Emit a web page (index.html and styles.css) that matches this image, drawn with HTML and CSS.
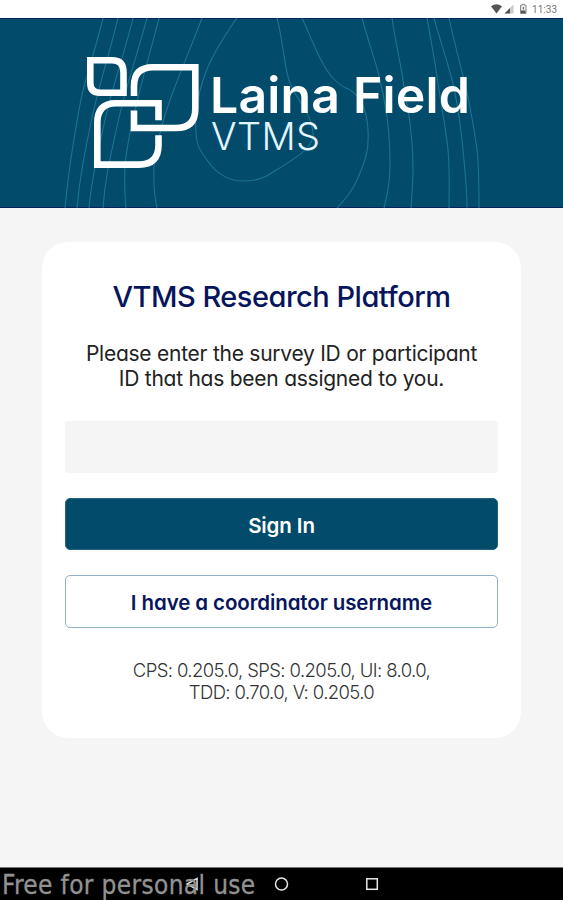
FILE: index.html
```
<!DOCTYPE html>
<html lang="en">
<head>
  <meta charset="UTF-8" />
  <meta name="viewport" content="width=device-width, initial-scale=1.0"/>
  <title>Laina Field VTMS</title>
  <link rel="stylesheet" href="styles.css">
</head>
<body>

  <div class="status-bar">
    <svg class="status-icons" width="38" height="12" viewBox="0 0 38 12">
      <path d="M0 3.3Q5.500 -.8 11 3.300L5.500 10.500Z" fill="#555"/>
      <path d="M22.500 1.500V10.500H13.500Z" fill="#ccc"/>
      <path d="M19 5V10.500H13.500Z" fill="#555"/>
      <path d="M29.500 2.300H31V1.300H33.500V2.300H35V10.500H29.500Z" fill="#eee" stroke="#888"/>
      <path d="M30 7.500H34.500V10H30Z M31.800 4H32.800V6.500H31.800Z" fill="#555"/>
    </svg>
    <span class="clock">11:33</span>
  </div>

  <header class="banner">
    <svg class="banner-art" viewBox="0 18 563 190" role="img" aria-label="Laina Field VTMS">
      <!-- contour lines -->
      <g class="contours">
        <path d="M103 18C97 42 91 62 85 83S69 165 65 208"/>
        <path d="M118 18C111 48 99 85 92 118S80 175 77 208"/>
        <path d="M133 18C126 48 112 88 105 120S92 175 89 208"/>
        <path d="M147 18C139 48 125 90 118 122S105 178 103 208"/>
        <path d="M159 18C150 55 128 125 125 167Q124 190 126 208"/>
        <path d="M202 18C191 47 179 75 170 100S156 148 154 167Q153 190 157 208"/>
        <path d="M237 18C222 39 210 58 203 80S195 118 196 133S201 151 207 160C218 176 230 181 243 181S264 178 270 174S301 156 308 147S314 132 310 120S296 98 290 83S284 45 277 18"/>
        <path d="M302 18C313 42 321 65 333 78S346 86 353 92S367 110 368 130S366 158 360 173S349 195 337 208"/>
        <path d="M362 18C368 40 374 57 378 72S385 102 387 117S390 150 390 167S387 196 384 208"/>
        <path d="M392 18C395 40 400 60 403 80S408 108 410 123S413 152 413 167S412 195 411 208"/>
        <path d="M427 18C431 40 435 62 438 83S446 130 448 150S449 190 449 208"/>
        <path d="M434 18C440 40 447 60 452 80S461 130 463 150S467 190 467 208"/>
        <path d="M449 18C455 47 465 80 470 107S475 135 477 150S479 190 479 208"/>
      </g>
      <!-- leaf mark -->
      <g class="leaves">
        <path d="M90.300 60.300H112Q123.500 60.300 123.500 72V92.700H100Q90.300 92.700 90.300 83Z"/>
        <path d="M134 96V86Q134 67.300 153 67.300H195.300V109Q195.300 128 176 128H134V110.500"/>
        <path d="M158.500 120.300V103.300H116Q97.300 103.300 97.300 123V164.600H139Q158.500 164.600 158.500 145V135.300"/>
      </g>
      <text>
        <tspan class="brand" x="210" y="113.300" textLength="260">Laina Field</tspan>
        <tspan class="brand-sub" x="211" y="150" textLength="109">VTMS</tspan>
      </text>
    </svg>
  </header>

  <main class="content">
    <form class="card" autocomplete="off">
      <h1 class="card-title">VTMS Research Platform</h1>
      <p class="card-text">Please enter the survey ID or participant<br>ID that has been assigned to you.</p>
      <input class="id-input" type="text" name="participantId" aria-label="Survey ID or participant ID">
      <button class="btn btn-primary" type="button">Sign In</button>
      <button class="btn btn-outline" type="button">I have a coordinator username</button>
      <p class="versions">CPS: 0.205.0, SPS: 0.205.0, UI: 8.0.0,<br>TDD: 0.70.0, V: 0.205.0</p>
    </form>
  </main>

  <footer class="nav-bar">
    <svg class="nav-icons" viewBox="0 0 563 32">
      <path d="M197 10.500V21.500L187 16Z"/>
      <circle cx="281.500" cy="16" r="6"/>
      <rect x="366.800" y="10.800" width="10.500" height="10.500"/>
    </svg>
    <span class="watermark">Free for personal use</span>
  </footer>

</body>
</html>
```
FILE: styles.css
```
:root {
  --teal: #024b6b;
  --navy: #07165c;
  --grey: #f5f5f5;
}

* {
  box-sizing: border-box;
}

body {
  margin: 0;
  height: 900px;
  display: flex;
  flex-direction: column;
  overflow: hidden;
  background: var(--grey);
  font-family: Inter, sans-serif;
}

.status-bar {
  height: 18px;
  padding: 0 6px 0 0;
  display: flex;
  align-items: center;
  justify-content: flex-end;
  gap: 3px;
  background: #fff;
}

.clock {
  font-family: Roboto, sans-serif;
  font-size: 10px;
  color: #777;
}

.banner {
  height: 190px;
  background: var(--teal);
  box-shadow: inset 0 1px #06235c, inset 0 -1px #06235c;
}

.banner-art {
  display: block;
  width: 563px;
  height: 190px;
}

.contours {
  fill: none;
  stroke: #1d7391;
  stroke-width: 1.1;
}

.leaves {
  fill: none;
  stroke: #fff;
  stroke-width: 6.6;
}

.brand {
  font-size: 50px;
  font-weight: 600;
  fill: #fff;
}

.brand-sub {
  font-size: 38px;
  font-weight: 300;
  fill: #e3f5ff;
}

.content {
  flex: 1;
  padding: 34px 42px 0;
}

.card {
  height: 496px;
  padding: 36px 23px 0;
  display: flex;
  flex-direction: column;
  background: #fff;
  border-radius: 26px;
  text-align: center;
  /* single-storey a */
  font-feature-settings: "cv11";
}

.card-title {
  margin: 0;
  font-size: 29px;
  line-height: 38px;
  font-weight: 500;
  letter-spacing: -0.5px;
  color: var(--navy);
}

.card-text {
  margin: 25px 0 0;
  font-size: 21px;
  line-height: 25px;
  letter-spacing: -0.25px;
  color: #222;
  white-space: nowrap;
}

.id-input {
  height: 52px;
  margin-top: 30px;
  padding: 0 14px;
  border: 0;
  border-radius: 3px;
  background: var(--grey);
  font: inherit;
}

.btn {
  height: 52px;
  padding: 1px 0 0;
  border-radius: 5px;
  font-family: inherit;
  font-feature-settings: inherit;
  font-size: 20.5px;
  font-weight: 600;
  letter-spacing: -0.1px;
}

.btn-primary {
  margin-top: 25px;
  padding-top: 2px;
  border: 1px solid #295f82;
  background: var(--teal);
  color: #fff;
}

.btn-outline {
  height: 53px;
  margin-top: 25px;
  border: 1px solid #8fb0c5;
  background: #fff;
  color: var(--navy);
}

.versions {
  margin: 31px 0 0;
  font-size: 18.5px;
  line-height: 22px;
  font-weight: 300;
  letter-spacing: -0.6px;
  color: #333;
}

.nav-bar {
  position: relative;
  height: 33px;
  border-top: 1px solid #777;
  background: #000;
}

.nav-icons {
  display: block;
  width: 563px;
  height: 32px;
  fill: none;
  stroke: #e6e6e6;
  stroke-width: 1.5;
}

.watermark {
  position: absolute;
  left: 2px;
  top: 1px;
  font-family: "DejaVu Sans Condensed", "DejaVu Sans", sans-serif;
  font-stretch: condensed;
  font-size: 26px;
  line-height: 32px;
  letter-spacing: 0.35px;
  color: #929292;
  -webkit-text-stroke: 0.3px #929292;
  white-space: nowrap;
}
```
